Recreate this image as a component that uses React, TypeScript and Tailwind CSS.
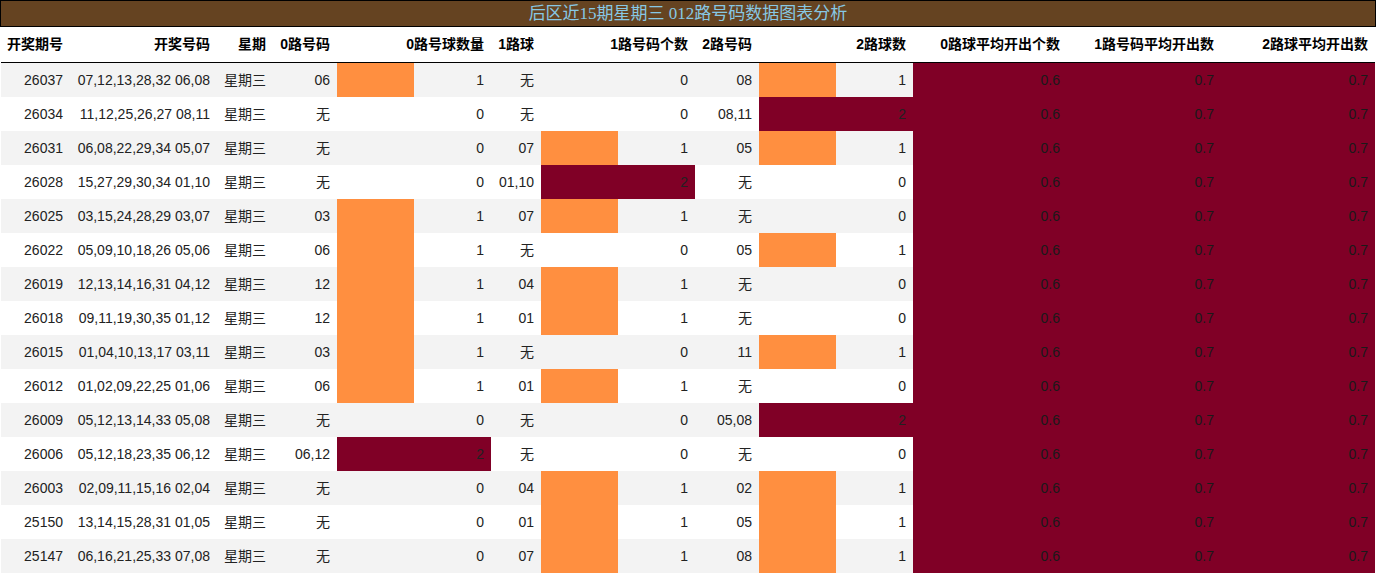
type Row = {
  period: string;
  numbers: string;
  zero: string;
  zeroCnt: number;
  one: string;
  oneCnt: number;
  two: string;
  twoCnt: number;
};

const rows: Row[] = [
  { period: "26037", numbers: "07,12,13,28,32 06,08", zero: "06", zeroCnt: 1, one: "无", oneCnt: 0, two: "08", twoCnt: 1 },
  { period: "26034", numbers: "11,12,25,26,27 08,11", zero: "无", zeroCnt: 0, one: "无", oneCnt: 0, two: "08,11", twoCnt: 2 },
  { period: "26031", numbers: "06,08,22,29,34 05,07", zero: "无", zeroCnt: 0, one: "07", oneCnt: 1, two: "05", twoCnt: 1 },
  { period: "26028", numbers: "15,27,29,30,34 01,10", zero: "无", zeroCnt: 0, one: "01,10", oneCnt: 2, two: "无", twoCnt: 0 },
  { period: "26025", numbers: "03,15,24,28,29 03,07", zero: "03", zeroCnt: 1, one: "07", oneCnt: 1, two: "无", twoCnt: 0 },
  { period: "26022", numbers: "05,09,10,18,26 05,06", zero: "06", zeroCnt: 1, one: "无", oneCnt: 0, two: "05", twoCnt: 1 },
  { period: "26019", numbers: "12,13,14,16,31 04,12", zero: "12", zeroCnt: 1, one: "04", oneCnt: 1, two: "无", twoCnt: 0 },
  { period: "26018", numbers: "09,11,19,30,35 01,12", zero: "12", zeroCnt: 1, one: "01", oneCnt: 1, two: "无", twoCnt: 0 },
  { period: "26015", numbers: "01,04,10,13,17 03,11", zero: "03", zeroCnt: 1, one: "无", oneCnt: 0, two: "11", twoCnt: 1 },
  { period: "26012", numbers: "01,02,09,22,25 01,06", zero: "06", zeroCnt: 1, one: "01", oneCnt: 1, two: "无", twoCnt: 0 },
  { period: "26009", numbers: "05,12,13,14,33 05,08", zero: "无", zeroCnt: 0, one: "无", oneCnt: 0, two: "05,08", twoCnt: 2 },
  { period: "26006", numbers: "05,12,18,23,35 06,12", zero: "06,12", zeroCnt: 2, one: "无", oneCnt: 0, two: "无", twoCnt: 0 },
  { period: "26003", numbers: "02,09,11,15,16 02,04", zero: "无", zeroCnt: 0, one: "04", oneCnt: 1, two: "02", twoCnt: 1 },
  { period: "25150", numbers: "13,14,15,28,31 01,05", zero: "无", zeroCnt: 0, one: "01", oneCnt: 1, two: "05", twoCnt: 1 },
  { period: "25147", numbers: "06,16,21,25,33 07,08", zero: "无", zeroCnt: 0, one: "07", oneCnt: 1, two: "08", twoCnt: 1 },
];

const headers = [
  "开奖期号",
  "开奖号码",
  "星期",
  "0路号码",
  "0路号球数量",
  "1路球",
  "1路号码个数",
  "2路号码",
  "2路球数",
  "0路球平均开出个数",
  "1路号码平均开出数",
  "2路球平均开出数",
];

const grid =
  "grid grid-cols-[69px_147px_56px_64px_154px_50px_154px_64px_154px_154px_154px_154px]";

function Cell({ children }: { children: React.ReactNode }) {
  return <div className="flex items-center justify-end pr-[7px] h-[34px]">{children}</div>;
}

function BarCell({ value }: { value: number }) {
  return (
    <div className="relative flex items-center justify-end pr-[7px] h-[34px]">
      {value > 0 && (
        <div
          className={value >= 2 ? "absolute left-0 top-0 h-full bg-[#800026]" : "absolute left-0 top-0 h-full bg-[#ff8f40]"}
          style={{ width: `${(value / 2) * 100}%` }}
        />
      )}
      <span className="relative">{value}</span>
    </div>
  );
}

function AvgCell({ value }: { value: string }) {
  return (
    <div className="flex items-center justify-end pr-[7px] h-[34px] bg-[#800026] text-[#1a1a1a]">{value}</div>
  );
}

export default function App() {
  return (
    <div className="w-[1376px] bg-white font-['Liberation_Sans','Noto_Sans_CJK_SC',sans-serif] text-[14px]">
      <div className="h-[27px] bg-[#654321] border border-black flex items-center justify-center">
        <span className="text-[17px] leading-none text-[#87c8e4] font-['Liberation_Serif','Noto_Sans_CJK_SC',serif]">
          后区近15期星期三 012路号码数据图表分析
        </span>
      </div>
      <div className="px-px">
        <div className={`${grid} h-[36px] border-b border-black font-bold text-black`}>
          {headers.map((h) => (
            <div key={h} className="flex items-center justify-end pr-[7px]">
              {h}
            </div>
          ))}
        </div>
        {rows.map((r, i) => (
          <div key={r.period} className={`${grid} ${i % 2 === 0 ? "bg-[#f3f3f3]" : "bg-white"} text-[#222]`}>
            <Cell>{r.period}</Cell>
            <Cell>{r.numbers}</Cell>
            <Cell>星期三</Cell>
            <Cell>{r.zero}</Cell>
            <BarCell value={r.zeroCnt} />
            <Cell>{r.one}</Cell>
            <BarCell value={r.oneCnt} />
            <Cell>{r.two}</Cell>
            <BarCell value={r.twoCnt} />
            <AvgCell value="0.6" />
            <AvgCell value="0.7" />
            <AvgCell value="0.7" />
          </div>
        ))}
      </div>
    </div>
  );
}
